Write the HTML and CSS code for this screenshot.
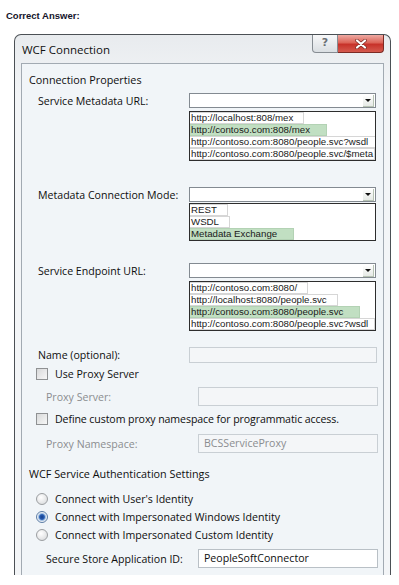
FILE: index.html
```html
<!DOCTYPE html>
<html lang="en">
<head>
  <meta charset="UTF-8">
  <title>WCF Connection</title>
  <link rel="stylesheet" href="styles.css">
</head>
<body>
  <p class="caption">Correct Answer:</p>
  <div class="window">
    <div class="titlebar">
      <span class="title">WCF Connection</span>
      <div class="caption-buttons">
        <span class="btn-help">?</span>
        <span class="btn-close">
          <svg width="14" height="10" viewBox="0 0 14 10">
            <path d="M3 1.5 L11 8.5 M11 1.5 L3 8.5" stroke="#7a2822" stroke-width="3.6" stroke-linecap="round"/>
            <path d="M3 1.5 L11 8.5 M11 1.5 L3 8.5" stroke="#fff" stroke-width="2.2" stroke-linecap="round"/>
          </svg>
        </span>
      </div>
    </div>

    <div class="panel">
      <h2 class="group">Connection Properties</h2>

      <div class="row r1">
        <label>Service Metadata URL:</label>
        <div class="combo"><span class="arrow"></span></div>
      </div>
      <ul class="list l1">
        <li>http://localhost:808/mex</li>
        <li class="sel">http://contoso.com:808/mex</li>
        <li>http://contoso.com:8080/people.svc?wsdl</li>
        <li class="full">http://contoso.com:8080/people.svc/$meta</li>
      </ul>

      <div class="row r2">
        <label>Metadata Connection Mode:</label>
        <div class="combo"><span class="arrow"></span></div>
      </div>
      <ul class="list l2">
        <li>REST</li>
        <li>WSDL</li>
        <li class="sel">Metadata Exchange</li>
      </ul>

      <div class="row r3">
        <label>Service Endpoint URL:</label>
        <div class="combo"><span class="arrow"></span></div>
      </div>
      <ul class="list l3">
        <li>http://contoso.com:8080/</li>
        <li>http://localhost:8080/people.svc</li>
        <li class="sel">http://contoso.com:8080/people.svc</li>
        <li class="full">http://contoso.com:8080/people.svc?wsdl</li>
      </ul>

      <div class="row r-name">
        <label>Name (optional):</label>
        <div class="textbox disabled"></div>
      </div>

      <div class="option r-check1">
        <span class="check"></span>
        <span>Use Proxy Server</span>
      </div>

      <div class="row sub r-proxy">
        <label class="dim">Proxy Server:</label>
        <div class="textbox disabled"></div>
      </div>

      <div class="option r-check2">
        <span class="check"></span>
        <span>Define custom proxy namespace for programmatic access.</span>
      </div>

      <div class="row sub r-ns">
        <label class="dim">Proxy Namespace:</label>
        <div class="textbox disabled dim">BCSServiceProxy</div>
      </div>

      <h2 class="group g2">WCF Service Authentication Settings</h2>

      <div class="option r-radio1">
        <span class="radio"></span>
        <span>Connect with User's Identity</span>
      </div>
      <div class="option r-radio2">
        <span class="radio on"></span>
        <span>Connect with Impersonated Windows Identity</span>
      </div>
      <div class="option r-radio3">
        <span class="radio"></span>
        <span>Connect with Impersonated Custom Identity</span>
      </div>

      <div class="row sub r-store">
        <label>Secure Store Application ID:</label>
        <div class="textbox">PeopleSoftConnector</div>
      </div>
    </div>
  </div>
</body>
</html>
```

FILE: styles.css
```css
body {
  margin: 0;
  background: #fff;
  font-family: "Open Sans", "DejaVu Sans", sans-serif;
  color: #151515;
}

.caption {
  margin: 0;
  padding: 10px 0 0 6px;
  font: bold 9.5px "Liberation Sans", Arial, sans-serif;
  line-height: 11px;
  color: #14142a;
}

/* window frame */
.window {
  box-sizing: border-box;
  width: 377px;
  margin: 13px 0 0 14px;
  padding: 0 6px;
  border: 1px solid #4b5055;
  border-bottom: 0;
  border-radius: 7px 7px 0 0;
  background: linear-gradient(#e8ebee, #f3f5f7 60px);
}

.titlebar {
  display: flex;
  justify-content: space-between;
  height: 28px;
}

.title {
  padding: 8px 0 0 1px;
  font-size: 11.5px;
  line-height: 14px;
  color: #111;
}

.caption-buttons {
  display: flex;
  height: 18px;
}

.btn-help {
  box-sizing: border-box;
  width: 26px;
  border: 1px solid #868c92;
  border-top: 0;
  border-radius: 0 0 0 4px;
  background: linear-gradient(#f7f8f9, #dadee2);
  color: #6a6f74;
  font: bold 11px "DejaVu Sans", sans-serif;
  line-height: 16px;
  text-align: center;
}

.btn-close {
  box-sizing: border-box;
  width: 46px;
  display: flex;
  align-items: center;
  justify-content: center;
  border: 1px solid #7c2a24;
  border-top: 0;
  border-left: 0;
  border-radius: 0 0 4px 0;
  background: linear-gradient(#eeaaa3 0%, #dc6458 45%, #c7322a 55%, #d55a4e 100%);
}

/* content panel */
.panel {
  height: 511px;
  border: 1px solid #a2aab2;
  border-bottom: 0;
  background: #f1f5f8;
  font-size: 10.6px;
  color: #0e0e0e;
}

.group {
  margin: 9px 0 0 7px;
  height: 14px;
  font-size: 10.8px;
  font-weight: normal;
  line-height: 14px;
}

.g2 { margin-top: 14px; }

.row {
  display: flex;
  align-items: center;
  margin-left: 16px;
}

.row label {
  width: 151px;
  flex: none;
}

.row.sub { margin-left: 24px; }
.row.sub label { width: 152px; }

.dim { color: #8b8d90; }

.combo {
  box-sizing: border-box;
  width: 187px;
  height: 15px;
  display: flex;
  justify-content: flex-end;
  align-items: center;
  border: 1px solid #838a91;
  background: #fff;
}

.arrow {
  box-sizing: border-box;
  width: 11px;
  height: 12px;
  margin-right: 1px;
  display: flex;
  align-items: center;
  justify-content: center;
  border-right: 1px solid #b7c3b4;
  border-bottom: 1px solid #b7c3b4;
  background: linear-gradient(#fff, #e6eae6);
}

.arrow::after {
  content: "";
  border-left: 3px solid transparent;
  border-right: 3px solid transparent;
  border-top: 3px solid #111;
}

.list {
  box-sizing: border-box;
  width: 187px;
  margin: 3px 0 0 167px;
  padding: 0;
  list-style: none;
  border: 1px solid #2d2d2d;
  background: #fff;
  font: 9.7px "Liberation Sans", Arial, sans-serif;
  line-height: 10px;
  color: #1a1a1a;
  overflow: hidden;
}

.list li {
  width: fit-content;
  padding: 0 10px 0 1px;
  border: 1px solid #d6d6d6;
  border-left: 0;
  white-space: nowrap;
}

.list li.sel {
  background: #c1dfc2;
  border-color: #b3d2b4;
  padding-right: 16px;
}

.list li.full {
  width: auto;
  padding-right: 0;
  overflow: hidden;
}

.r1 { margin-top: 6px; }
.r2 { margin-top: 26px; }
.l2 { margin-top: 1px; }
.r3 { margin-top: 22px; }
.r-name { margin-top: 16px; }
.r-check1 { margin-top: 4px; }
.r-proxy { margin-top: 7px; }
.r-check2 { margin-top: 6px; }
.r-ns { margin-top: 9px; }
.r-radio1 { margin-top: 11px; }
.r-radio2, .r-radio3 { margin-top: 4px; }
.r-store { margin-top: 7px; }

.textbox {
  box-sizing: border-box;
  width: 188px;
  height: 16px;
  padding-left: 5px;
  border: 1px solid #b9c0c6;
  background: #fff;
  line-height: 16px;
}

.row.sub .textbox {
  width: 180px;
  height: 19px;
  line-height: 17px;
}

.r-proxy .textbox { height: 18px; }

.textbox.disabled {
  border-color: #c9cfd4;
  background: #f4f6f8;
}

.option {
  display: flex;
  align-items: center;
  gap: 7px;
  height: 14px;
  margin-left: 14px;
}

.r-check2 span:last-child { letter-spacing: -0.1px; }

.check {
  box-sizing: border-box;
  width: 12px;
  height: 12px;
  border: 1px solid #8f9193;
  background: linear-gradient(135deg, #d8d9da, #f7f7f7);
}

.r-check1, .r-check2 { height: 13px; }

.radio {
  box-sizing: border-box;
  width: 12px;
  height: 12px;
  border-radius: 50%;
  border: 1px solid #9b9ea1;
  background: radial-gradient(circle at 40% 35%, #fff, #d4d6d8);
}

.radio.on {
  border-color: #5d7ea6;
  background: radial-gradient(circle, #163f8c 0, #2a5fb4 2.4px, #9bbbe0 3.4px, #eef2f7 4.6px);
}
```
